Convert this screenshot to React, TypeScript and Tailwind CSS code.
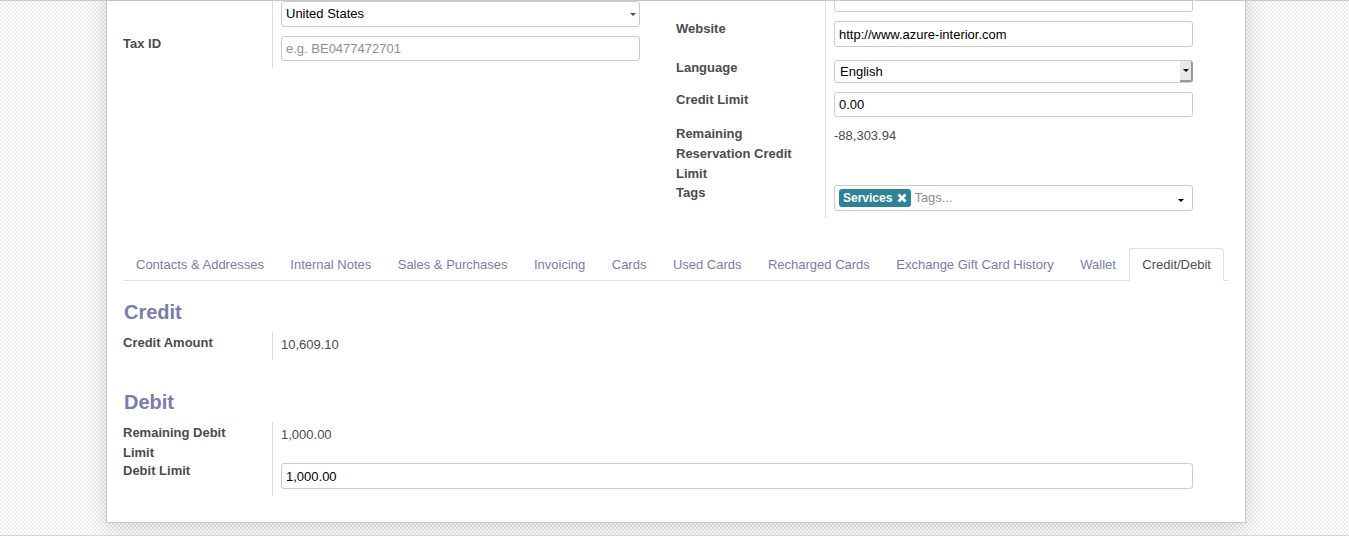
import type { ReactNode } from 'react'

const tabs = [
  'Contacts & Addresses',
  'Internal Notes',
  'Sales & Purchases',
  'Invoicing',
  'Cards',
  'Used Cards',
  'Recharged Cards',
  'Exchange Gift Card History',
  'Wallet',
  'Credit/Debit',
]

const field =
  'block w-full rounded-[3px] border border-[#ccc] bg-white px-1 text-[13px] text-black placeholder:text-[#8f8f8f] focus:outline-none'

function Row({ label, id, className = '', children }: { label: string; id?: string; className?: string; children: ReactNode }) {
  const text = 'w-[149px] shrink-0 pt-px pr-6 text-[13px] leading-5 font-bold'
  return (
    <div className={`flex items-stretch ${className}`}>
      {id ? (
        <label htmlFor={id} className={text}>
          {label}
        </label>
      ) : (
        <span className={text}>{label}</span>
      )}
      <div className="min-w-0 flex-1 border-l border-[#ddd] pt-[3px] pl-2">{children}</div>
    </div>
  )
}

function Value({ children }: { children: ReactNode }) {
  return <span className="block text-[13px] leading-5">{children}</span>
}

function Caret({ className = '' }: { className?: string }) {
  return (
    <svg viewBox="0 0 6 3" className={`pointer-events-none absolute h-[3px] w-[6px] ${className}`} aria-hidden="true">
      <path d="M0 0h6L3 3z" fill="currentColor" />
    </svg>
  )
}

export default function App() {
  return (
    <div className="bg-white font-['Liberation_Sans',Arial,sans-serif] text-[#4c4c4c]">
      <main className="overflow-hidden border-y border-t-[#c8c8c8] border-b-[#d5d5d5] bg-[repeating-conic-gradient(#ededed_0_25%,#ffffff_0_50%)] bg-[length:4px_4px] pb-3 pl-[3px]">
        <div className="mx-auto max-w-[1140px] border border-t-0 border-[#c8c8d3] bg-white px-4 pb-[26px] shadow-[0_5px_20px_rgba(0,0,0,0.15)]">
          <div className="-mt-[18px] grid grid-cols-2">
            <div className="pt-[15px] pr-9">
              <Row label="" className="h-[35px]">
                <div className="relative">
                  <select aria-label="Country" className={`${field} h-[26px] appearance-none`}>
                    <option>United States</option>
                  </select>
                  <Caret className="top-3 right-1" />
                </div>
              </Row>
              <Row label="Tax ID" id="tax" className="h-[35px]">
                <input id="tax" className={`${field} h-[25px]`} placeholder="e.g. BE0477472701" />
              </Row>
            </div>
            <div className="pr-9">
              <Row label="" className="h-[35px]">
                <input aria-label="Email" className={`${field} h-[26px]`} />
              </Row>
              <Row label="Website" id="website" className="h-[39px]">
                <input id="website" className={`${field} h-[26px]`} defaultValue="http://www.azure-interior.com" />
              </Row>
              <Row label="Language" id="language" className="h-8">
                <div className="relative">
                  <select id="language" className={`${field} h-[23px] appearance-none pl-[5px]`}>
                    <option>English</option>
                  </select>
                  <span className="pointer-events-none absolute inset-y-px right-0 w-[13px] rounded-r-[3px] border-r-2 border-b-2 border-[#999] bg-[#e8e8e8] text-black">
                    <Caret className="top-2 right-[2px]" />
                  </span>
                </div>
              </Row>
              <Row label="Credit Limit" id="limit" className="h-[34px]">
                <input id="limit" className={`${field} h-[25px]`} defaultValue="0.00" />
              </Row>
              <Row label="Remaining Reservation Credit Limit" className="h-[59px]">
                <Value>-88,303.94</Value>
              </Row>
              <Row label="Tags" id="tags" className="h-9">
                <div className="relative flex h-[26px] items-center rounded-[3px] border border-[#ccc] px-1">
                  <span className="flex h-[18px] items-center gap-[5px] rounded-[3px] bg-[#2c8397] px-1 text-[12px] font-bold text-white">
                    Services
                    <button type="button" aria-label="Remove Services">
                      <svg viewBox="0 0 10 10" className="h-[10px] w-[10px]" aria-hidden="true">
                        <path d="M1.5 1.5l7 7m0-7l-7 7" stroke="currentColor" strokeWidth="2.8" />
                      </svg>
                    </button>
                  </span>
                  <input id="tags" className="min-w-0 flex-1 pl-[3px] text-[13px] placeholder:text-[#8f8f8f] focus:outline-none" placeholder="Tags..." />
                  <Caret className="right-2 bottom-2 text-black" />
                </div>
              </Row>
            </div>
          </div>

          <div role="tablist" className="mt-[30px] flex justify-between border-b border-[#dee2e6] pr-[5px]">
            {tabs.map((tab) => (
              <button
                key={tab}
                type="button"
                role="tab"
                aria-selected={tab === 'Credit/Debit'}
                className={`-mb-px h-[33px] rounded-t-[3px] border px-3 text-[13px] whitespace-nowrap ${
                  tab === 'Credit/Debit' ? 'border-[#dee2e6] border-b-white bg-white' : 'border-transparent text-[#7c7bad]'
                }`}
              >
                {tab}
              </button>
            ))}
          </div>

          <section className="pt-[17px] pr-9">
            <h2 className="pb-[6px] pl-px text-[20px] leading-7 font-bold text-[#7c7bad]">Credit</h2>
            <Row label="Credit Amount" className="h-7">
              <Value>10,609.10</Value>
            </Row>
          </section>
          <section className="pt-7 pr-9">
            <h2 className="pb-[6px] pl-px text-[20px] leading-7 font-bold text-[#7c7bad]">Debit</h2>
            <Row label="Remaining Debit Limit" className="h-[38px]">
              <Value>1,000.00</Value>
            </Row>
            <Row label="Debit Limit" id="debit" className="h-9">
              <input id="debit" className={`${field} h-[26px]`} defaultValue="1,000.00" />
            </Row>
          </section>
        </div>
      </main>
    </div>
  )
}
